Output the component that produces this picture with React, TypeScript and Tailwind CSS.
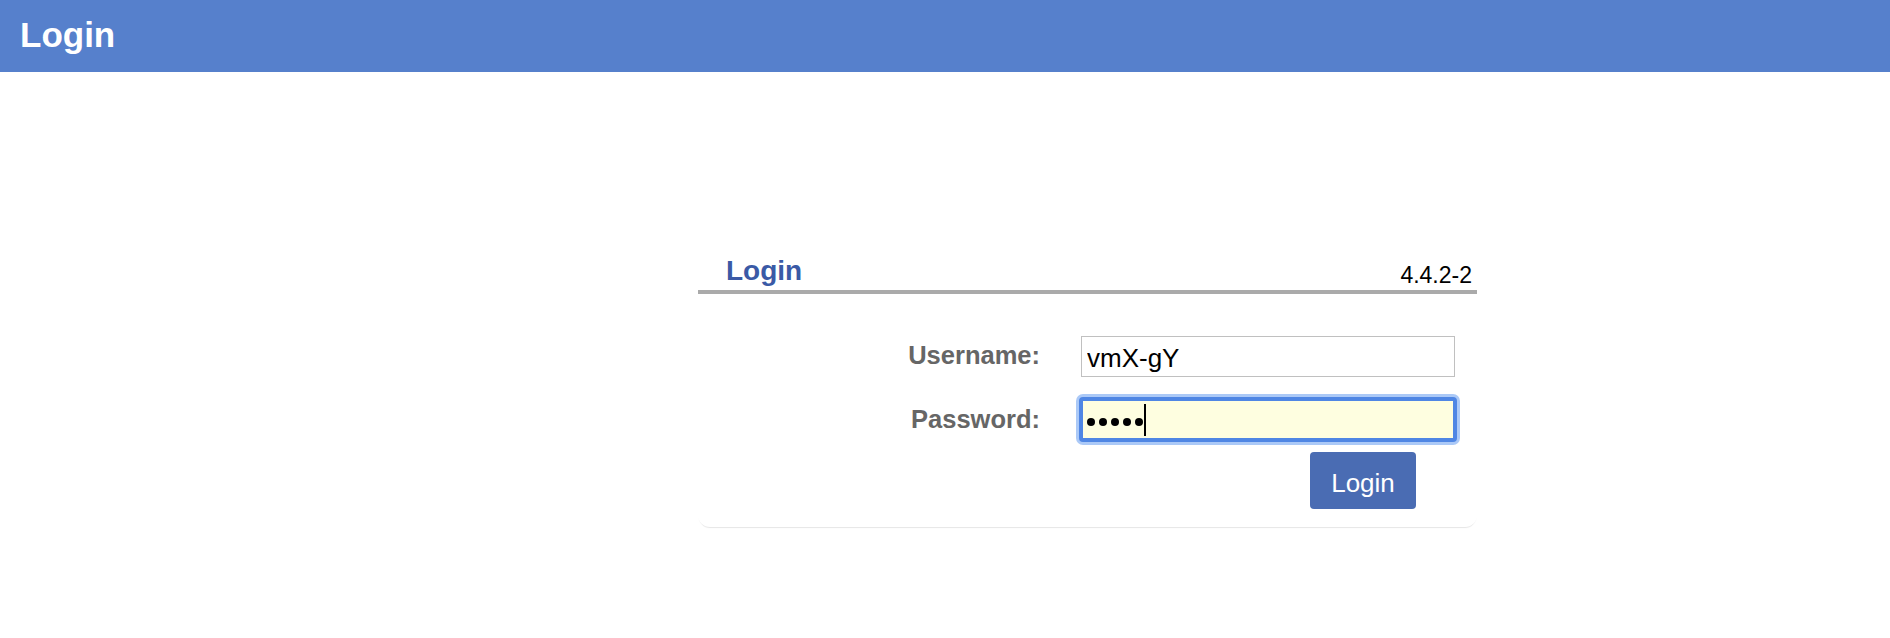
import { useState } from "react";

const FONT = "font-['Liberation_Sans',Arial,sans-serif]";

export default function App() {
  const [username, setUsername] = useState("vmX-gY");

  return (
    <div className={`min-h-screen bg-white ${FONT}`}>
      {/* Top bar */}
      <header className="h-[72px] bg-[#5680cc] px-[20px] pt-[17px]">
        <h1 className="text-[35px] leading-[35px] font-bold text-white">Login</h1>
      </header>

      {/* Login panel */}
      <section className="ml-[698px] mt-[185px] w-[779px] rounded-b-[12px] bg-white pb-[18px] shadow-[0_2px_1px_-1px_rgba(0,0,0,0.1)]">
        <div className="flex items-end justify-between border-b-4 border-[#aaaaaa] pl-[28px] pr-[5px]">
          <h2 className="mb-[5px] text-[28px] leading-[28px] font-bold text-[#3a5aa6]">Login</h2>
          <span className="mb-[3px] text-[23px] leading-[23px] text-black">4.4.2-2</span>
        </div>

        <div className="pt-[42px]">
          {/* Username */}
          <div className="flex items-start">
            <label className="w-[342px] text-right text-[25.5px] leading-[39px] font-bold text-[#666666]">
              Username:
            </label>
            <input
              value={username}
              onChange={(e) => setUsername(e.target.value)}
              className={`ml-[41px] h-[41px] w-[374px] border border-[#c0c0c0] bg-white px-[5px] pt-[3px] text-[26px] text-black outline-none ${FONT}`}
            />
          </div>

          {/* Password (focused) */}
          <div className="mt-[20px] flex items-start">
            <label className="w-[342px] text-right text-[25.5px] leading-[45px] font-bold text-[#666666]">
              Password:
            </label>
            <div className="ml-[39px] flex h-[45px] w-[378px] items-center rounded-[4px] border-4 border-[#4f86e4] bg-[#fefee0] pl-[4px] shadow-[0_0_0_3px_#abc9f7]">
              <div className="flex gap-[4px] pt-[4px]">
                <span className="h-[8px] w-[8px] rounded-full bg-black" />
                <span className="h-[8px] w-[8px] rounded-full bg-black" />
                <span className="h-[8px] w-[8px] rounded-full bg-black" />
                <span className="h-[8px] w-[8px] rounded-full bg-black" />
                <span className="h-[8px] w-[8px] rounded-full bg-black" />
              </div>
              <span className="ml-[1px] h-[32px] w-[2px] bg-black" />
            </div>
          </div>

          {/* Submit */}
          <div className="mt-[10px] flex">
            <button className="ml-[612px] h-[57px] w-[106px] rounded-[4px] bg-[#4a6cb3] pt-[5px] text-[26px] leading-[52px] text-white">
              Login
            </button>
          </div>
        </div>
      </section>
    </div>
  );
}
